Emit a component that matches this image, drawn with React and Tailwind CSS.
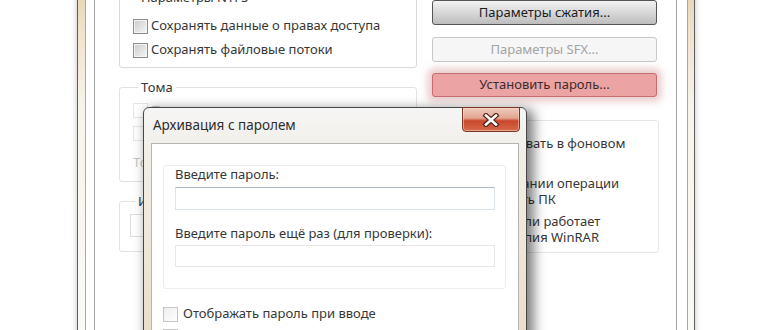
import React from 'react';

const Check = ({ tone = 'normal' }) => {
  const cls = {
    normal: 'border-[#8c8c8c] bg-gradient-to-br from-[#cbcbcb] to-[#f6f6f6] shadow-[inset_0_0_0_1px_#f4f4f4]',
    faint: 'border-[#e6e6e6] bg-white',
    light: 'border-[#c6c6c6] bg-gradient-to-br from-[#eeeeee] to-white',
  }[tone];
  return <span className={`block h-[15px] w-[15px] shrink-0 border ${cls}`} />;
};

const MainWindow = () => (
  <div className="absolute left-[77px] top-[-30px] h-[400px] w-[618px] border-x border-[#5e5e5e] bg-[linear-gradient(180deg,#e2cfa6_0%,#eee2ca_15%,#f8f4ec_35%,#fbfaf7_100%)] pl-[7px] pr-[6px] shadow-[0_0_6px_rgba(0,0,0,0.25)]">
    <div className="h-full border-x border-[#a9a9a9] bg-white pl-[8px] pr-[10px]">
      <div className="flex h-full gap-[13px] border-x border-[#a3a3a3] pl-[24px] pr-[16px] pt-[19px]">
        {/* Left column */}
        <div className="w-[298px]">
          <fieldset className="rounded-[3px] border border-[#dadada] pb-[5px] pl-[13px]">
            <legend className="ml-[5px] px-[3px] leading-[16px]">Параметры NTFS</legend>
            <div className="mt-[9px] flex h-[24px] items-center gap-[3px]">
              <Check />
              <span>Сохранять данные о правах доступа</span>
            </div>
            <div className="flex h-[24px] items-center gap-[3px]">
              <Check />
              <span>Сохранять файловые потоки</span>
            </div>
          </fieldset>

          <fieldset className="mt-[11px] rounded-[3px] border border-[#e2e2e2] pb-[11px] pl-[13px]">
            <legend className="ml-[5px] px-[3px] leading-[16px]">Тома</legend>
            <div className="mt-[4px] flex h-[23px] items-center gap-[3px] text-[#c4c4c4]">
              <Check tone="faint" />
              <span>Пауза после каждого тома</span>
            </div>
            <div className="flex h-[23px] items-center gap-[3px] text-[#c4c4c4]">
              <Check tone="faint" />
              <span>Старая схема имён томов</span>
            </div>
            <div className="mt-[9px] leading-[16px] text-[#c4c4c4]">Тома для восстановления</div>
          </fieldset>

          <fieldset className="mt-[11px] rounded-[3px] border border-[#e2e2e2] pb-[14px] pl-[10px]">
            <legend className="ml-[5px] px-[3px] leading-[16px]">Информация для восстановления</legend>
            <div className="mt-[5px] h-[23px] w-[160px] border border-[#dcdcdc] bg-white" />
          </fieldset>
        </div>

        {/* Right column */}
        <div className="w-[229px]">
          <button className="mx-[2px] mt-[11px] flex h-[25px] w-[225px] items-center justify-center rounded-[3px] border border-[#555555] bg-gradient-to-b from-[#f3f3f3] to-[#bdbdbd] text-[#1d1d1d]">
            Параметры сжатия...
          </button>
          <button className="mx-[2px] mt-[12px] flex h-[25px] w-[225px] items-center justify-center rounded-[3px] border border-[#c8c8c8] bg-[#f6f6f6] text-[#a3a3a3]">
            Параметры SFX...
          </button>
          <button className="mx-[2px] mt-[11px] flex h-[24px] w-[225px] items-center justify-center rounded-[3px] border border-[#c46e6e] bg-[#eca3a3] text-[#3d2c2c] shadow-[0_0_7px_5px_rgba(218,160,160,0.5)]">
            Установить пароль...
          </button>

          <div className="mt-[23px] h-[133px] rounded-[3px] border border-[#e6e6e6] pl-[14px] leading-[16px]">
            <div className="mt-[14px] flex items-start gap-[4px]">
              <span className="mt-[1px]"><Check /></span>
              <span>Архивировать в фоновом<br />режиме</span>
            </div>
            <div className="mt-[8px] flex items-start gap-[4px]">
              <span className="mt-[1px]"><Check /></span>
              <span>По окончании операции<br />выключить ПК</span>
            </div>
            <div className="mt-[6px] flex items-start gap-[4px]">
              <span className="mt-[1px]"><Check /></span>
              <span>Ждать, если работает<br />другая копия WinRAR</span>
            </div>
          </div>
        </div>
      </div>
    </div>
  </div>
);

const CloseButton = () => (
  <div className="absolute right-[6px] top-[-1px] flex h-[25px] w-[58px] items-center justify-center rounded-b-[4px] border border-[#7a3526] bg-[linear-gradient(180deg,#efcabd_0%,#e3a591_44%,#c9472b_56%,#d66a4a_100%)] shadow-[inset_0_0_0_1px_rgba(255,220,210,0.5)]">
    <svg width="18" height="14" viewBox="0 0 18 14">
      <path d="M4 2.5 L14 11.5 M14 2.5 L4 11.5" stroke="#4c2419" strokeWidth="5" strokeLinecap="square" />
      <path d="M4 2.5 L14 11.5 M14 2.5 L4 11.5" stroke="#ffffff" strokeWidth="2.6" strokeLinecap="square" />
    </svg>
  </div>
);

const PasswordDialog = () => (
  <div className="absolute left-[143px] top-[107px] h-[250px] w-[384px] rounded-t-[6px] border border-[#474747] bg-[linear-gradient(180deg,#f5f5f5_0px,#f2eee6_50px,#eadcc4_100%)] shadow-[5px_4px_12px_2px_rgba(0,0,0,0.5)]">
    <div className="flex h-[35px] items-center pl-[9px] text-[13.5px] text-[#2d2d2d]">Архивация с паролем</div>
    <CloseButton />
    <div className="mx-[7px] h-full border border-[#b5b5b5] bg-white">
      <div className="ml-[11px] mr-[12px] mt-[21px] h-[124px] rounded-[3px] border border-[#ececec] px-[11px]">
        <div className="leading-[16px]">Введите пароль:</div>
        <div className="mt-[5px] h-[23px] w-[320px] border border-[#dde4ea] border-t-[#a9b7c6] bg-white" />
        <div className="mt-[15px] leading-[16px]">Введите пароль ещё раз (для проверки):</div>
        <div className="mt-[4px] h-[22px] w-[320px] border border-[#e8e8e8] bg-white" />
      </div>
      <div className="ml-[11px] mt-[14px] flex h-[22px] items-center gap-[5px]">
        <Check tone="light" />
        <span>Отображать пароль при вводе</span>
      </div>
      <div className="ml-[11px] flex h-[22px] items-center gap-[5px]">
        <Check tone="light" />
        <span>Шифровать имена файлов</span>
      </div>
    </div>
  </div>
);

export default function App() {
  return (
    <div className="relative h-[330px] w-[770px] overflow-hidden bg-white font-['Noto_Sans',sans-serif] text-[13px] text-[#373737]">
      <MainWindow />
      <PasswordDialog />
    </div>
  );
}
